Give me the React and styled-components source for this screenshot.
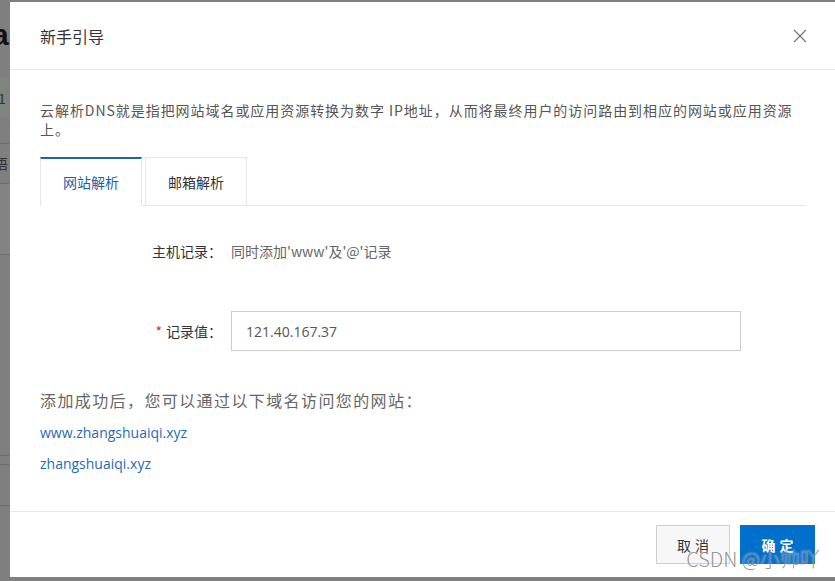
import React from 'react';
import styled, { createGlobalStyle } from 'styled-components';

const GlobalStyle = createGlobalStyle`
  html, body {
    margin: 0;
    padding: 0;
    background: #808080;
    overflow: hidden;
  }
  body {
    font-family: "Noto Sans CJK SC", "Noto Sans", sans-serif;
  }
`;

const Screen = styled.div`
  position: relative;
  display: flex;
  width: 835px;
  height: 581px;
  overflow: hidden;
`;

const BackStrip = styled.div`
  width: 10px;
  flex: none;
  display: flex;
  flex-direction: column;
  overflow: hidden;
  background: #7f7f7f;
`;

const BackLogo = styled.div`
  height: 70px;
  font: bold 30px "Liberation Sans", sans-serif;
  color: #111;
  line-height: 70px;
  margin-left: -8px;
`;

const BackBand = styled.div`
  height: ${(p) => p.h}px;
  background: ${(p) => p.bg || 'transparent'};
  border-bottom: ${(p) => (p.line ? '1px solid #6e6e6e' : 'none')};
  color: #333;
  font-size: 14px;
  line-height: ${(p) => p.h}px;
  white-space: nowrap;
  text-indent: -6px;
`;

const Modal = styled.div`
  width: 825px;
  height: 575px;
  margin-top: 2px;
  flex: none;
  background: #fff;
  display: flex;
  flex-direction: column;
`;

const Header = styled.div`
  height: 67px;
  flex: none;
  display: flex;
  align-items: center;
  justify-content: space-between;
  padding: 0 28px 0 30px;
  border-bottom: 1px solid #e6e6e6;
`;

const Title = styled.div`
  font-size: 16px;
  color: #333;
`;

const Close = styled.button`
  border: 0;
  background: none;
  padding: 0;
  width: 14px;
  height: 14px;
  display: flex;
`;

const Body = styled.div`
  flex: 1;
  padding: 31px 30px 0;
`;

const Desc = styled.p`
  margin: 0;
  width: 765px;
  font-size: 14px;
  line-height: 19px;
  letter-spacing: 0.95px;
  color: #555;
`;

const Tabs = styled.div`
  display: flex;
  gap: 3px;
  margin-top: 18px;
  border-bottom: 1px solid #e6e6e6;
`;

const Tab = styled.div`
  width: 102px;
  height: 49px;
  box-sizing: border-box;
  display: flex;
  align-items: center;
  justify-content: center;
  font-size: 14px;
  margin-bottom: -1px;
  color: ${(p) => (p.active ? '#1a5fa8' : '#333')};
  border: 1px solid #e6e6e6;
  border-top: ${(p) => (p.active ? '2px solid #1d64b0' : '1px solid #e6e6e6')};
  border-bottom: ${(p) => (p.active ? '1px solid #fff' : '1px solid #e6e6e6')};
  background: #fff;
`;

const Form = styled.div`
  margin-top: 25px;
  display: flex;
  flex-direction: column;
  gap: 40px;
`;

const Row = styled.div`
  display: flex;
  align-items: center;
  height: 40px;
`;

const Label = styled.div`
  width: 182px;
  padding-right: 9px;
  text-align: right;
  font-size: 14px;
  color: #333;
`;

const Star = styled.span`
  color: #c33;
  margin-right: 4px;
`;

const Value = styled.div`
  font-size: 14px;
  color: #666;
`;

const Input = styled.div`
  width: 510px;
  height: 40px;
  box-sizing: border-box;
  border: 1px solid #ccc;
  padding-left: 14px;
  display: flex;
  align-items: center;
  font: 14px "Open Sans", "Noto Sans", sans-serif;
  color: #555;
`;

const Success = styled.div`
  margin-top: 37px;
  font-size: 16px;
  line-height: 24px;
  letter-spacing: 1.4px;
  color: #666;
`;

const Links = styled.div`
  margin-top: 11px;
  display: flex;
  flex-direction: column;
  gap: 11px;
`;

const DomainLink = styled.a`
  font: 14px/20px "Open Sans", "Noto Sans", sans-serif;
  color: #1f6bb4;
  text-decoration: none;
`;

const Footer = styled.div`
  height: 66px;
  flex: none;
  box-sizing: border-box;
  border-top: 1px solid #e6e6e6;
  display: flex;
  justify-content: flex-end;
  align-items: flex-start;
  gap: 10px;
  padding: 13px 20px 0;
`;

const Button = styled.button`
  width: ${(p) => (p.primary ? '75px' : '74px')};
  height: 39px;
  box-sizing: border-box;
  font-family: "Noto Sans CJK SC", sans-serif;
  font-size: 14px;
  font-weight: ${(p) => (p.primary ? 700 : 400)};
  letter-spacing: 4px;
  text-indent: 4px;
  color: ${(p) => (p.primary ? '#fff' : '#333')};
  background: ${(p) => (p.primary ? '#0070cc' : '#f7f7f7')};
  border: 1px solid ${(p) => (p.primary ? '#0070cc' : '#d0d0d0')};
`;

const Watermark = styled.div`
  position: absolute;
  right: 15px;
  bottom: 8px;
  font: 300 20px "Noto Sans CJK SC", sans-serif;
  color: rgba(120, 120, 120, 0.8);
  text-shadow: 0 0 2px rgba(255, 255, 255, 0.8);
  pointer-events: none;
`;

export default function App() {
  return (
    <>
      <GlobalStyle />
      <Screen>
        <BackStrip>
          <BackLogo>a</BackLogo>
          <BackBand h={8} />
          <BackBand h={40} bg="#7e857e">:1</BackBand>
          <BackBand h={25} line />
          <BackBand h={39} line>语</BackBand>
          <BackBand h={70} bg="#838383" line />
          <BackBand h={200} line />
          <BackBand h={8} line />
          <BackBand h={40} line />
        </BackStrip>
        <Modal>
          <Header>
            <Title>新手引导</Title>
            <Close aria-label="关闭">
              <svg width="14" height="14" viewBox="0 0 14 14">
                <path d="M1 1L13 13M13 1L1 13" stroke="#777" strokeWidth="1.3" fill="none" />
              </svg>
            </Close>
          </Header>
          <Body>
            <Desc>
              云解析DNS就是指把网站域名或应用资源转换为数字 IP地址，从而将最终用户的访问路由到相应的网站或应用资源上。
            </Desc>
            <Tabs>
              <Tab active>网站解析</Tab>
              <Tab>邮箱解析</Tab>
            </Tabs>
            <Form>
              <Row>
                <Label>主机记录：</Label>
                <Value>同时添加'www'及'@'记录</Value>
              </Row>
              <Row>
                <Label>
                  <Star>*</Star>记录值：
                </Label>
                <Input>121.40.167.37</Input>
              </Row>
            </Form>
            <Success>添加成功后，您可以通过以下域名访问您的网站：</Success>
            <Links>
              <DomainLink href="#">www.zhangshuaiqi.xyz</DomainLink>
              <DomainLink href="#">zhangshuaiqi.xyz</DomainLink>
            </Links>
          </Body>
          <Footer>
            <Button>取消</Button>
            <Button primary>确定</Button>
          </Footer>
        </Modal>
        <Watermark>CSDN @小帅吖</Watermark>
      </Screen>
    </>
  );
}
